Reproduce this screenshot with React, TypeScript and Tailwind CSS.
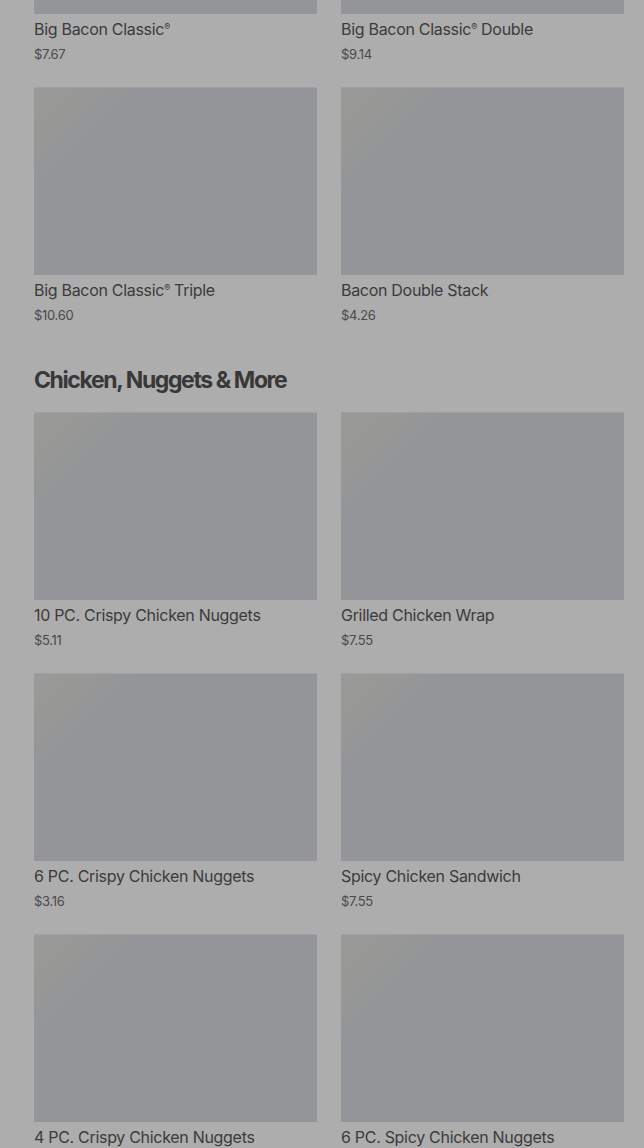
import React from "react";

type Item = { name: string; price: string };

const burgers: Item[] = [
  { name: "Big Bacon Classic®", price: "$7.67" },
  { name: "Big Bacon Classic® Double", price: "$9.14" },
  { name: "Big Bacon Classic® Triple", price: "$10.60" },
  { name: "Bacon Double Stack", price: "$4.26" },
];

const chicken: Item[] = [
  { name: "10 PC. Crispy Chicken Nuggets", price: "$5.11" },
  { name: "Grilled Chicken Wrap", price: "$7.55" },
  { name: "6 PC. Crispy Chicken Nuggets", price: "$3.16" },
  { name: "Spicy Chicken Sandwich", price: "$7.55" },
  { name: "4 PC. Crispy Chicken Nuggets", price: "$2.39" },
  { name: "6 PC. Spicy Chicken Nuggets", price: "$3.79" },
];

// raise the ® like the menu does, without touching the line box
function ItemName({ name }: { name: string }) {
  const parts = name.split("®");
  return (
    <>
      {parts.map((part, i) => (
        <React.Fragment key={i}>
          {part}
          {i < parts.length - 1 ? (
            <span className="relative -top-[5px] text-[9px] leading-none">®</span>
          ) : null}
        </React.Fragment>
      ))}
    </>
  );
}

function MenuCard({ item }: { item: Item }) {
  return (
    <div className="flex flex-col">
      <div className="h-[188px] w-full bg-[#939598] bg-[linear-gradient(135deg,#9a9a99_0%,#979796_14%,#939598_22%)] shadow-[inset_0_1px_0_#9ea0a3]" />
      <div className="mt-[5px] h-[20px] text-[16px] leading-[20px] tracking-[-0.3px] text-[#3b3b3b]">
        <ItemName name={item.name} />
      </div>
      <div className="mt-[7px] text-[13px] leading-[16px] tracking-[-0.3px] text-[#4a4a4a]">
        {item.price}
      </div>
    </div>
  );
}

function Section({ title, items }: { title?: string; items: Item[] }) {
  return (
    <section>
      {title ? (
        <h2 className="mb-[16px] text-[23px] font-bold leading-[32px] tracking-[-1.4px] text-[#383838]">
          {title}
        </h2>
      ) : null}
      <div className="grid grid-cols-2 gap-x-[24px] gap-y-[25px]">
        {items.map((item) => (
          <MenuCard key={item.name} item={item} />
        ))}
      </div>
    </section>
  );
}

export default function App() {
  return (
    <div
      className="h-[1148px] overflow-hidden bg-[#adadad]"
      style={{ fontFamily: "Inter, 'Noto Sans', sans-serif" }}
    >
      <div className="-mt-[174px] flex flex-col gap-[41px] pl-[34px] pr-[20px]">
        <Section items={burgers} />
        <Section title="Chicken, Nuggets & More" items={chicken} />
      </div>
    </div>
  );
}
